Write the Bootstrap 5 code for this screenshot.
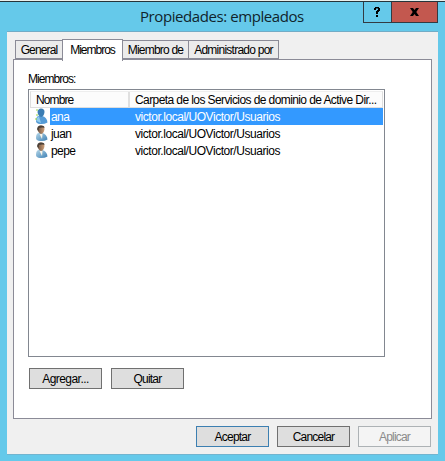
<!DOCTYPE html>
<html lang="es">
<head>
<meta charset="utf-8">
<meta name="viewport" content="width=device-width, initial-scale=1">
<title>Propiedades: empleados</title>
<link href="https://cdn.jsdelivr.net/npm/bootstrap@5.3.0/dist/css/bootstrap.min.css" rel="stylesheet">
<style>
body{width:445px;height:461px;overflow:hidden;background:#65c9ea;font:12px/17px "Liberation Sans",Arial,sans-serif;letter-spacing:-.8px;color:#000;border-top:1px solid #e8efec}
.window{height:460px;border-top:1px solid #26343a;padding:0 7px 6px}
.titlebar{height:29px;flex:none}
.caption{font:15px/29px "Open Sans","Noto Sans",sans-serif;letter-spacing:-.42px;color:#10242c;padding-left:133px;white-space:nowrap}
.controls{height:21px;width:75px;border:1px solid #333b42;border-top:0}
.help{width:28px;border-right:1px solid #333b42}
.close-box{background:#c3584f}
.surface{background:#f0f0f0;border-top:1px solid #72acc6;border-bottom:1px solid #72b4cf;padding:8px 6px 0}
.tabs{height:19px;padding-left:2px;position:relative;z-index:1}
.tab{height:19px;background:#ebebeb;border:1px solid #8b8b97;line-height:19px;text-align:center;white-space:nowrap;margin-right:-1px}
.tab.current{height:22px;background:#fff;border-bottom:0;margin-bottom:-2px;line-height:20px;z-index:2;position:relative}
.w-general{width:48px;letter-spacing:-.85px}.w-members{width:61px;letter-spacing:-1px}.w-memberof{width:67px}.w-managed{width:91px;letter-spacing:-.75px}
.page{height:360px;width:419px;background:#fff;border:1px solid #8b8b97;padding:10px 14px 0}
.list-label{height:19px;line-height:19px;letter-spacing:-.95px}
.listing{height:268px;width:357px;border:1px solid #828790;padding:1px}
.heading{height:17px;border:1px solid #dedede;border-top-color:#eee;line-height:17px;background:#fcfcfc}
.heading .c1{width:99px;padding-left:5px;border-right:2px solid #e0e0e0;letter-spacing:-.9px}
.heading .c2{padding-left:5px;white-space:nowrap;letter-spacing:-.59px}
.entry{height:17px}
.entry .pic{width:20px;padding-left:5px;flex:none;line-height:0}
.entry .name{width:85px;padding-left:1px;line-height:18px;letter-spacing:-.6px}
.entry .path{line-height:18px;white-space:nowrap;letter-spacing:-.45px}
.entry.picked .name,.entry.picked .path{background:#3399ff;color:#fff}
.push{width:73px;height:21px;padding:0;border:1px solid #707070;border-radius:0;background:#dedede;font-size:12px;line-height:20px;letter-spacing:-.8px;color:#000}
.push.wide{letter-spacing:-.55px}
.push.primary{border-color:#3c7fb1}
.push:disabled{opacity:1;background:#f4f4f4;border-color:#adb2b5;color:#8b8b8b}
.actions{padding-top:11px;padding-left:1px;gap:9px}
.footer-row{padding-top:7px;gap:8px;padding-right:1px}
</style>
</head>
<body>
<svg width="0" height="0" class="position-absolute" aria-hidden="true"><defs>
<linearGradient id="coat" x2="1" y2="1"><stop stop-color="#b4d6e8"/><stop offset="1" stop-color="#3c7fb3"/></linearGradient>
<linearGradient id="skin"><stop stop-color="#6b5140"/><stop offset="1" stop-color="#cfa079"/></linearGradient>
<symbol id="person" viewBox="0 0 14 17"><path d="M1 13Q1 8 4 8h3q5 1 5.500 6.500Q9 16.500 5 16 1 15.500 1 13z" fill="url(#coat)"/><path d="M2.500 4Q3 .5 6 .5q3.500 0 3.500 3.500Q9 8.500 6 9 3 8 2.500 4z" fill="url(#skin)"/><path d="M4.500 9l2.500 5L7.500 9 6 9z" fill="#f8f4e7"/><path d="M2.300 5Q1.500 .5 6 .4q3.500 0 3.500 2.300Q6 2.300 4 3L3.500 6z" fill="#4b4038"/></symbol>
</defs></svg>
<main class="window d-flex flex-column">
<header class="titlebar d-flex justify-content-between">
<div class="caption">Propiedades: empleados</div>
<div class="controls d-flex">
<div class="help d-flex align-items-center justify-content-center"><svg width="7" height="10" viewBox="0 0 7 10"><path d="M0 1h1V0h4v1h1v3H5v1H4v2H2V4h1V3h1V1.500H2V3H0zM2 8h2v2H2z"/></svg></div>
<div class="close-box flex-fill d-flex align-items-center justify-content-center"><svg width="9" height="8" viewBox="0 0 9 8"><path d="M0 0h3l1.500 2L6 0h3L6.300 4 9 8H6L4.500 6 3 8H0l2.700-4z"/></svg></div>
</div>
</header>
<section class="surface flex-fill">
<nav class="tabs d-flex align-items-end">
<div class="tab w-general">General</div><div class="tab current w-members">Miembros</div><div class="tab w-memberof">Miembro de</div><div class="tab w-managed">Administrado por</div>
</nav>
<div class="page">
<div class="list-label"><span>Miembros:</span></div>
<div class="listing">
<div class="heading d-flex"><div class="c1"><span>Nombre</span></div><div class="c2"><span>Carpeta de los Servicios de dominio de Active Dir...</span></div></div>
<div class="entry picked d-flex"><div class="pic"><svg width="14" height="17" viewBox="0 0 14 17"><path d="M1 13Q1 8 4 8h3q5 1 5.500 6.500Q9 16.500 5 16 1 15.500 1 13z" fill="#559bd6"/><path d="M2.500 4Q3 .5 6 .5q3.500 0 3.500 3.500Q9 8.500 6 9 3 8 2.500 4z" fill="#3b7db3"/><path d="M1.500 13Q1.500 9 4 8.500L6 15z" fill="#91cbed"/><path d="M2 1v2M2 6v2M1 10v2" stroke="#9bd843"/></svg></div><div class="name">ana</div><div class="path flex-fill"><span>victor.local/UOVictor/Usuarios</span></div></div>
<div class="entry d-flex"><div class="pic"><svg width="14" height="17"><use href="#person"/></svg></div><div class="name">juan</div><div class="path flex-fill"><span>victor.local/UOVictor/Usuarios</span></div></div>
<div class="entry d-flex"><div class="pic"><svg width="14" height="17"><use href="#person"/></svg></div><div class="name">pepe</div><div class="path flex-fill"><span>victor.local/UOVictor/Usuarios</span></div></div>
</div>
<div class="actions d-flex"><button class="btn push wide">Agregar...</button><button class="btn push">Quitar</button></div>
</div>
<div class="footer-row d-flex justify-content-end"><button class="btn push primary">Aceptar</button><button class="btn push">Cancelar</button><button class="btn push" disabled>Aplicar</button></div>
</section>
</main>
<script src="https://cdn.jsdelivr.net/npm/bootstrap@5.3.0/dist/js/bootstrap.bundle.min.js"></script>
</body>
</html>
